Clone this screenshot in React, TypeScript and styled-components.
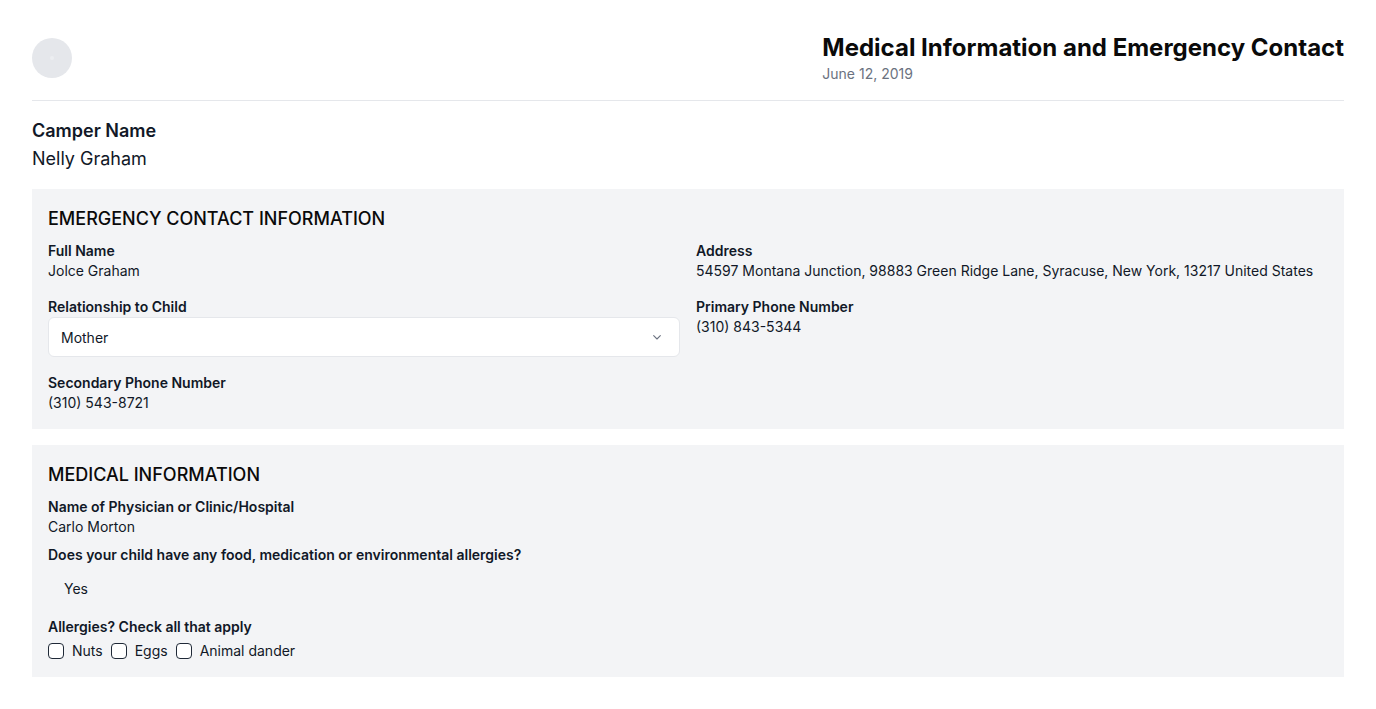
import React from "react";
import styled, { createGlobalStyle } from "styled-components";

const Global = createGlobalStyle`
  html, body { margin: 0; padding: 0; background: #ffffff; }
  body { font-family: Inter, "Noto Sans", sans-serif; color: #111827; -webkit-font-smoothing: antialiased; }
  * { box-sizing: border-box; }
`;

const Page = styled.div`
  padding: 32px;
`;

const Header = styled.header`
  display: flex;
  align-items: center;
  justify-content: space-between;
  padding-bottom: 16px;
  border-bottom: 1px solid #e5e7eb;
`;

const Avatar = styled.div`
  width: 40px;
  height: 40px;
  border-radius: 50%;
  background: #e5e7eb;
  display: flex;
  align-items: center;
  justify-content: center;
  &::after {
    content: "";
    width: 4px;
    height: 4px;
    border-radius: 50%;
    background: #eceef1;
  }
`;

const TitleBlock = styled.div`
  display: flex;
  flex-direction: column;
`;

const Title = styled.h1`
  margin: 0;
  font-size: 24px;
  line-height: 32px;
  font-weight: 700;
  color: #0a0a0a;
`;

const DateText = styled.div`
  font-size: 14px;
  line-height: 20px;
  color: #6b7280;
`;

const Camper = styled.div`
  margin-top: 16px;
  margin-bottom: 16px;
`;

const CamperLabel = styled.div`
  font-size: 18px;
  line-height: 28px;
  font-weight: 600;
`;

const CamperValue = styled.div`
  font-size: 18px;
  line-height: 28px;
  font-weight: 400;
`;

const Section = styled.section`
  background: #f3f4f6;
  padding: 16px;
  & + & { margin-top: 16px; }
`;

const SectionTitle = styled.h2`
  margin: 0 0 8px;
  font-size: 18px;
  line-height: 28px;
  font-weight: 500;
  color: #0a0a0a;
  text-transform: uppercase;
`;

const Grid = styled.div`
  display: grid;
  grid-template-columns: 1fr 1fr;
  column-gap: 16px;
  row-gap: 16px;
  align-items: start;
`;

const Stack = styled.div<{ $gap?: number }>`
  display: flex;
  flex-direction: column;
  gap: ${(p) => p.$gap ?? 8}px;
`;

const Field = styled.div`
  display: flex;
  flex-direction: column;
`;

const Label = styled.div`
  font-size: 14px;
  line-height: 20px;
  font-weight: 600;
`;

const Value = styled.div`
  font-size: 14px;
  line-height: 20px;
  font-weight: 400;
`;

const Select = styled.div`
  height: 40px;
  background: #ffffff;
  border: 1px solid #e5e7eb;
  border-radius: 6px;
  padding: 0 14px 0 12px;
  display: flex;
  align-items: center;
  justify-content: space-between;
  font-size: 14px;
`;

const Answer = styled.div`
  padding: 14px 16px 10px;
  font-size: 14px;
  line-height: 20px;
`;

const Checks = styled.div`
  margin-top: 4px;
  display: flex;
  align-items: center;
  gap: 8px;
  font-size: 14px;
  line-height: 20px;
`;

const CheckItem = styled.label`
  display: flex;
  align-items: center;
  gap: 8px;
`;

const Box = styled.span`
  width: 16px;
  height: 16px;
  border: 1px solid #1f2937;
  border-radius: 4px;
  background: #ffffff;
  display: inline-block;
`;

const Chevron = () => (
  <svg width="16" height="16" viewBox="0 0 24 24" fill="none" stroke="#6b7280" strokeWidth="1.6" strokeLinecap="round" strokeLinejoin="round">
    <path d="m7 10 5 5 5-5" />
  </svg>
);

export default function App() {
  return (
    <>
      <Global />
      <Page>
        <Header>
          <Avatar />
          <TitleBlock>
            <Title>Medical Information and Emergency Contact</Title>
            <DateText>June 12, 2019</DateText>
          </TitleBlock>
        </Header>
        <Camper>
          <CamperLabel>Camper Name</CamperLabel>
          <CamperValue>Nelly Graham</CamperValue>
        </Camper>
        <Section>
          <SectionTitle>Emergency Contact Information</SectionTitle>
          <Grid>
            <Field>
              <Label>Full Name</Label>
              <Value>Jolce Graham</Value>
            </Field>
            <Field>
              <Label>Address</Label>
              <Value>54597 Montana Junction, 98883 Green Ridge Lane, Syracuse, New York, 13217 United States</Value>
            </Field>
            <Field>
              <Label>Relationship to Child</Label>
              <Select>
                <span>Mother</span>
                <Chevron />
              </Select>
            </Field>
            <Field>
              <Label>Primary Phone Number</Label>
              <Value>(310) 843-5344</Value>
            </Field>
            <Field>
              <Label>Secondary Phone Number</Label>
              <Value>(310) 543-8721</Value>
            </Field>
          </Grid>
        </Section>
        <Section>
          <SectionTitle>Medical Information</SectionTitle>
          <Stack $gap={8}>
            <Field>
              <Label>Name of Physician or Clinic/Hospital</Label>
              <Value>Carlo Morton</Value>
            </Field>
            <Field>
              <Label>Does your child have any food, medication or environmental allergies?</Label>
              <Answer>Yes</Answer>
            </Field>
            <Field>
              <Label>Allergies? Check all that apply</Label>
              <Checks>
                <CheckItem><Box />Nuts</CheckItem>
                <CheckItem><Box />Eggs</CheckItem>
                <CheckItem><Box />Animal dander</CheckItem>
              </Checks>
            </Field>
          </Stack>
        </Section>
      </Page>
    </>
  );
}
